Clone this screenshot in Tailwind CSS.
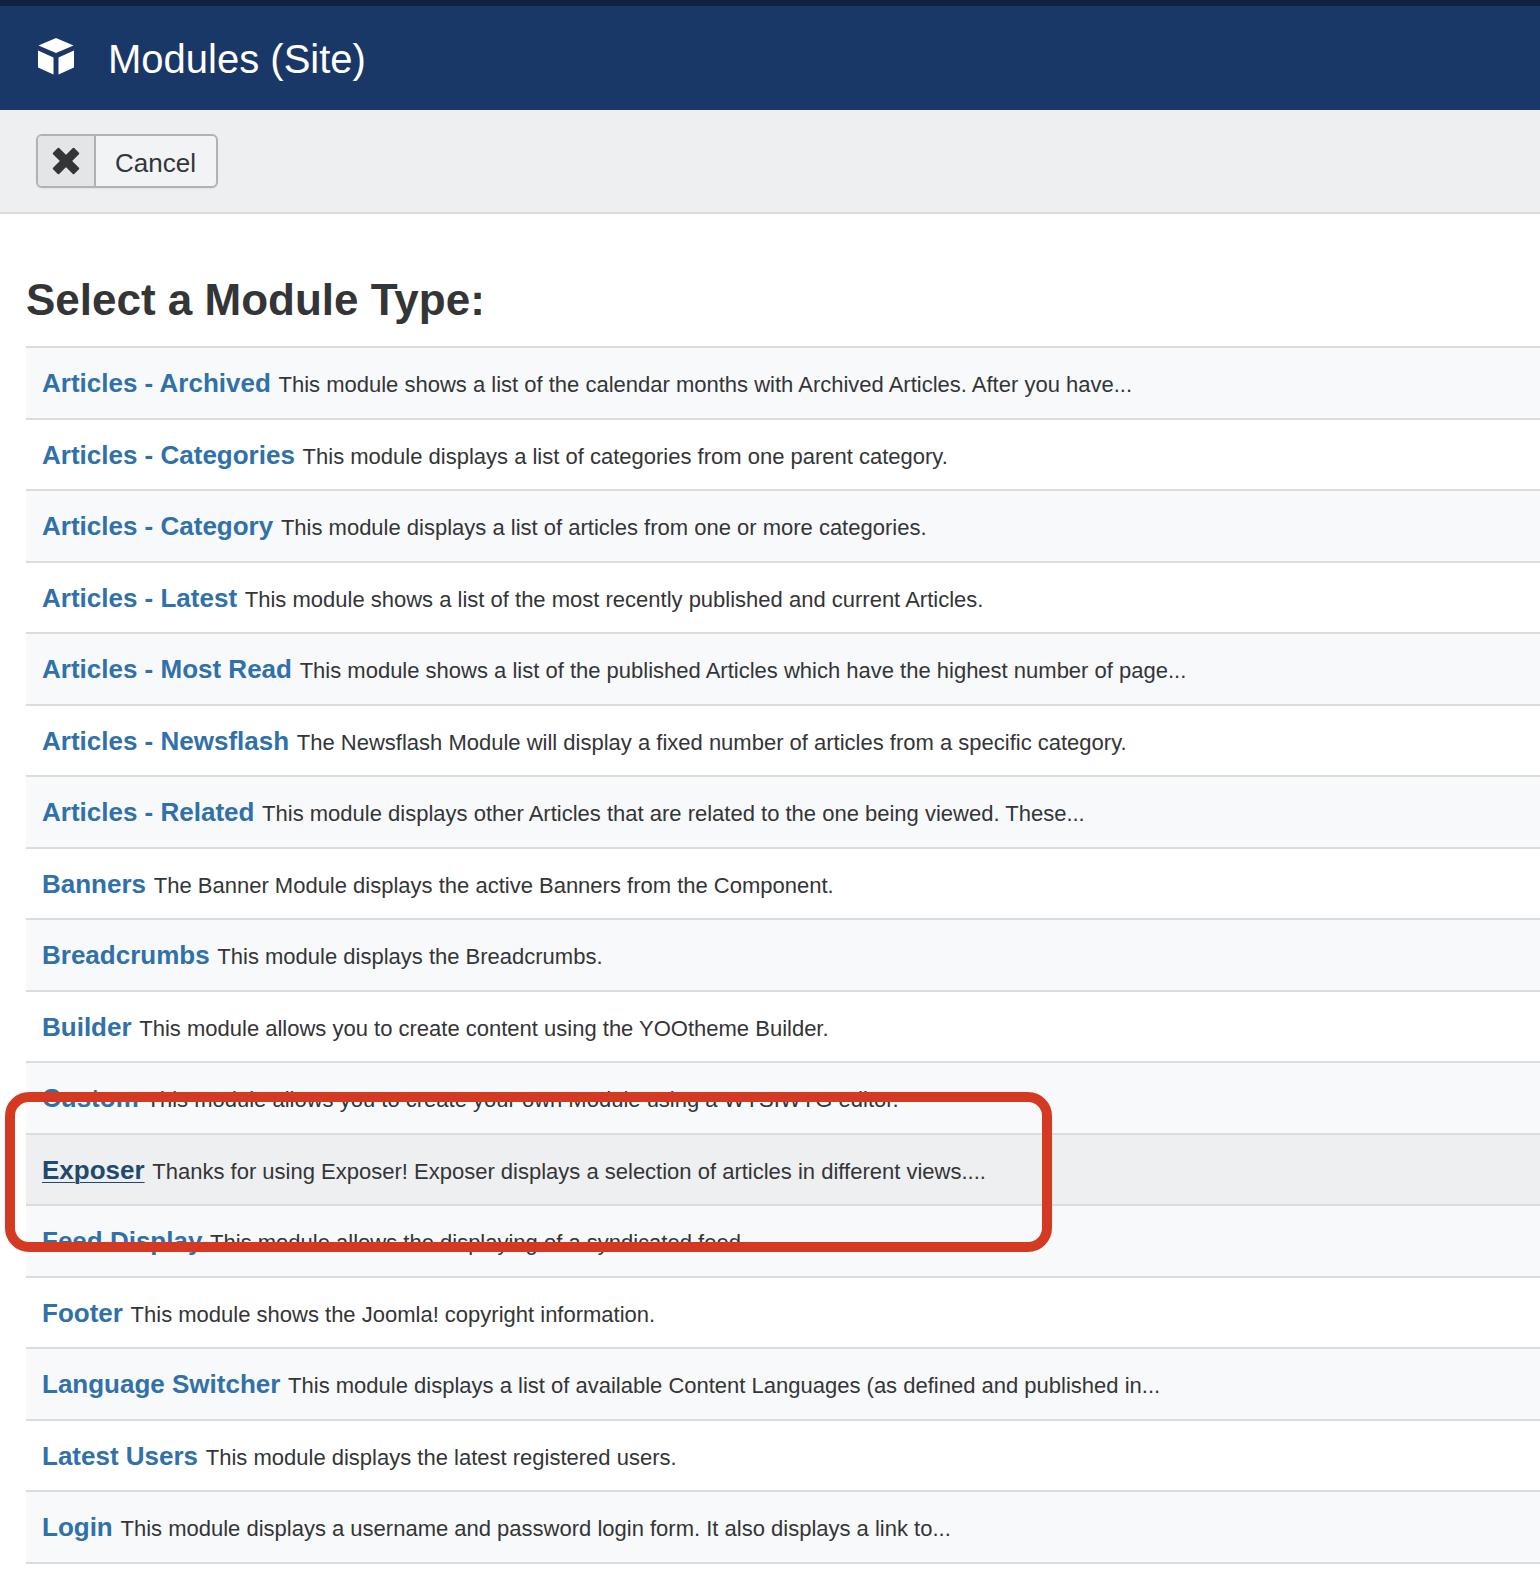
<!DOCTYPE html>
<html lang="en">
<head>
    <meta charset="UTF-8">
    <meta name="viewport" content="width=device-width, initial-scale=1.0">
    <title>Modules (Site)</title>
    <script src="https://cdn.jsdelivr.net/npm/@tailwindcss/browser@4"></script>
</head>
<body class="bg-white font-['Liberation_Sans',Arial,sans-serif] text-[#333537] overflow-x-hidden">
    <header class="flex items-center gap-8 border-t-6 border-[#10223e] bg-[#1a3867] px-9 pt-[23px] pb-[21px] text-white">
        <svg class="mb-1 size-10" viewBox="0 0 40 40" fill="currentColor" aria-hidden="true">
            <path d="M20 1 37.5 8.500 20 16 2.500 8.500z"/>
            <path d="M2 13.500 17.500 20.500V37.500L2 30.500z"/>
            <path d="M38 13.500 22.500 20.500V37.500L38 30.500z"/>
        </svg>
        <h1 class="text-[40px] leading-15">Modules (Site)</h1>
    </header>

    <!-- Toolbar -->
    <div class="border-b-2 border-[#dadcdf] bg-[#edeff1] px-9 py-6">
        <button type="button" class="flex h-[54px] items-stretch overflow-hidden rounded-md border-2 border-[#b0b2b4] bg-[#f2f3f5] text-[26px] shadow-xs">
            <span class="flex w-[58px] items-center justify-center border-r-2 border-[#b0b2b4] bg-[#e4e5e7]">
                <svg class="size-7" viewBox="0 0 28 28" fill="currentColor" aria-hidden="true">
                    <rect x="-1" y="9.700" width="30" height="8.600" rx="1" transform="rotate(45 14 14)"/>
                    <rect x="-1" y="9.700" width="30" height="8.600" rx="1" transform="rotate(-45 14 14)"/>
                </svg>
            </span>
            <span class="pt-[3px] pr-5 pl-[19px] leading-12">Cancel</span>
        </button>
    </div>

    <main class="pt-14 pl-[26px]">
        <h2 class="mb-4 text-[44px] leading-15 font-bold">Select a Module Type:</h2>
        <ul class="border-b-2 border-[#dadcdf] text-[22px] leading-[38px] *:border-t-2 *:border-[#dadcdf] *:px-4 *:pt-[18px] *:odd:bg-[#f8f9fb] *:odd:pb-[14px] *:even:pb-[13px] [&_a]:mr-0.5 [&_a]:text-[26px] [&_a]:leading-none [&_a]:font-bold [&_a]:text-[#3071a9] [&_a]:hover:underline">
            <li><a href="#">Articles - Archived</a> This module shows a list of the calendar months with Archived Articles. After you have...</li>
            <li><a href="#">Articles - Categories</a> This module displays a list of categories from one parent category.</li>
            <li><a href="#">Articles - Category</a> This module displays a list of articles from one or more categories.</li>
            <li><a href="#">Articles - Latest</a> This module shows a list of the most recently published and current Articles.</li>
            <li><a href="#">Articles - Most Read</a> This module shows a list of the published Articles which have the highest number of page...</li>
            <li><a href="#">Articles - Newsflash</a> The Newsflash Module will display a fixed number of articles from a specific category.</li>
            <li><a href="#">Articles - Related</a> This module displays other Articles that are related to the one being viewed. These...</li>
            <li><a href="#">Banners</a> The Banner Module displays the active Banners from the Component.</li>
            <li><a href="#">Breadcrumbs</a> This module displays the Breadcrumbs.</li>
            <li><a href="#">Builder</a> This module allows you to create content using the YOOtheme Builder.</li>
            <li><a href="#">Custom</a> This module allows you to create your own Module using a WYSIWYG editor.</li>
            <li class="relative bg-[#eeeff1]">
                <a href="#" class="text-[#1f496e]! underline decoration-1 underline-offset-3">Exposer</a> Thanks for using Exposer! Exposer displays a selection of articles in different views....
                <!-- Highlight frame -->
                <div class="pointer-events-none absolute -top-[43px] -left-[21px] z-10 h-40 w-[1047px] rounded-3xl border-10 border-[#d43a21]"></div>
            </li>
            <li><a href="#">Feed Display</a> This module allows the displaying of a syndicated feed.</li>
            <li><a href="#">Footer</a> This module shows the Joomla! copyright information.</li>
            <li><a href="#">Language Switcher</a> This module displays a list of available Content Languages (as defined and published in...</li>
            <li><a href="#">Latest Users</a> This module displays the latest registered users.</li>
            <li><a href="#">Login</a> This module displays a username and password login form. It also displays a link to...</li>
        </ul>
    </main>
</body>
</html>
